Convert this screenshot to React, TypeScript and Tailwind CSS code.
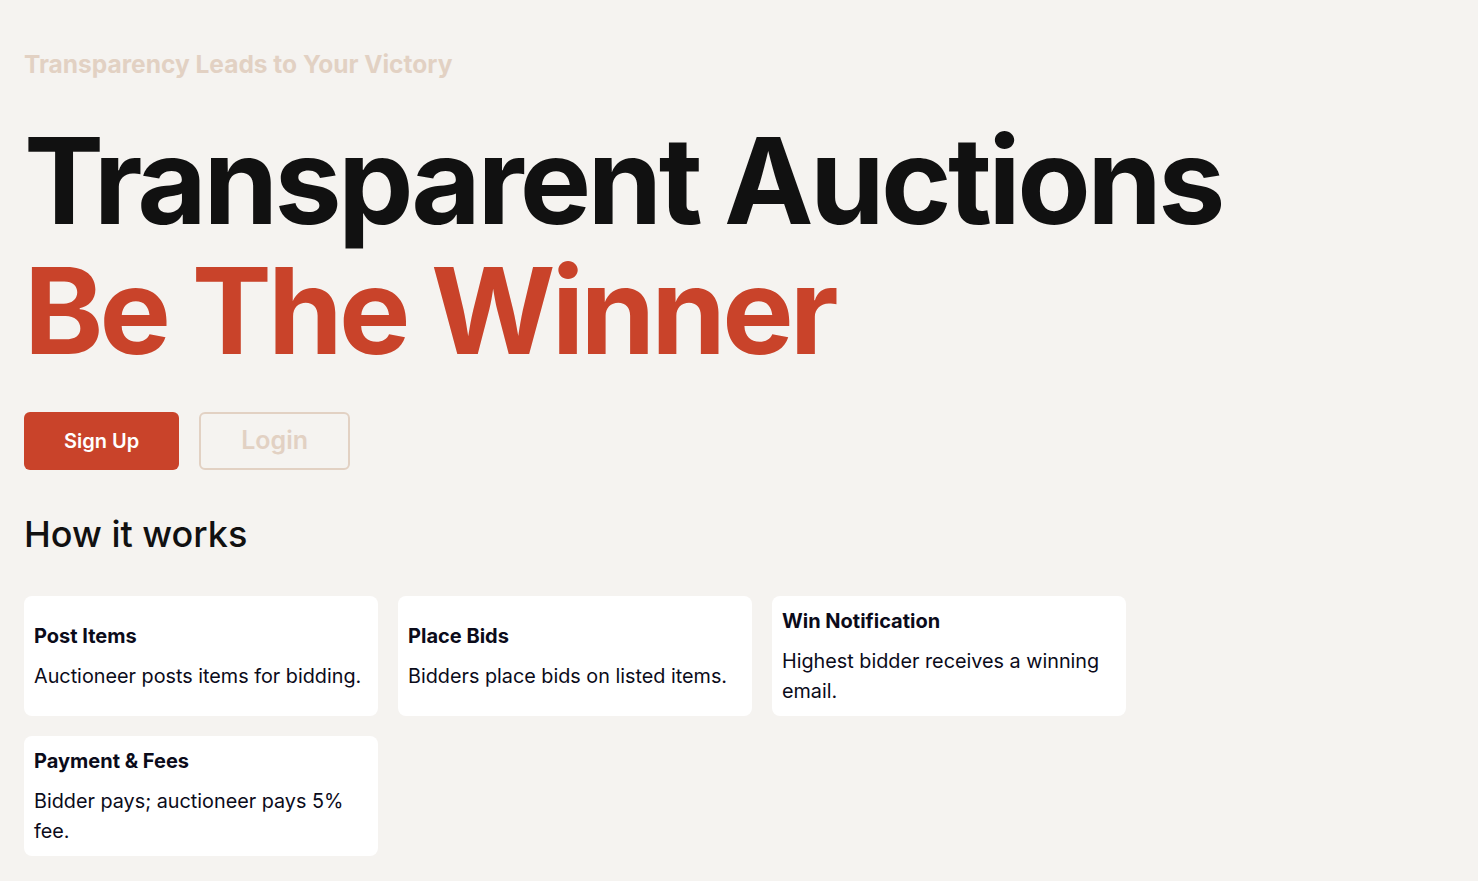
const steps = [
  { title: "Post Items", body: "Auctioneer posts items for bidding." },
  { title: "Place Bids", body: "Bidders place bids on listed items." },
  { title: "Win Notification", body: "Highest bidder receives a winning email." },
  { title: "Payment & Fees", body: "Bidder pays; auctioneer pays 5% fee." },
];

export default function App() {
  return (
    <div
      className="min-h-screen w-full bg-[#f5f3f0] px-6 pt-12 pb-6"
      style={{ fontFamily: "Inter, 'Noto Sans', sans-serif" }}
    >
      <p className="text-[24.5px] leading-8 font-bold text-[#e2d1c3]">
        Transparency Leads to Your Victory
      </p>
      <h1 className="mt-9 text-[120px] leading-[130px] font-bold text-[#111111]">
        <span className="tracking-[-0.03em]">Transparent Auctions</span>
        <br />
        <span className="tracking-[-0.032em] text-[#c9432a]">Be The Winner</span>
      </h1>

      <div className="mt-9 flex gap-5">
        <button className="h-[58px] rounded-md bg-[#c9432a] px-10 text-xl font-semibold text-white">
          Sign Up
        </button>
        <button className="h-[58px] rounded-md border-2 border-[#e2d1c3] px-10 text-[25px] font-semibold text-[#e2d1c3]">
          Login
        </button>
      </div>

      <h2 className="mt-11 text-4xl font-medium text-[#111111]">How it works</h2>

      <div className="mt-[42px] grid grid-cols-[repeat(3,354px)] gap-5">
        {steps.map((s) => (
          <div
            key={s.title}
            className="flex min-h-[120px] flex-col justify-center rounded-lg bg-white p-2.5"
          >
            <h3 className="text-xl leading-7 font-bold text-[#0b0b1a]">{s.title}</h3>
            <p className="mt-[11px] text-[19.8px] leading-[30px] text-[#0b0b1a]">{s.body}</p>
          </div>
        ))}
      </div>
    </div>
  );
}
